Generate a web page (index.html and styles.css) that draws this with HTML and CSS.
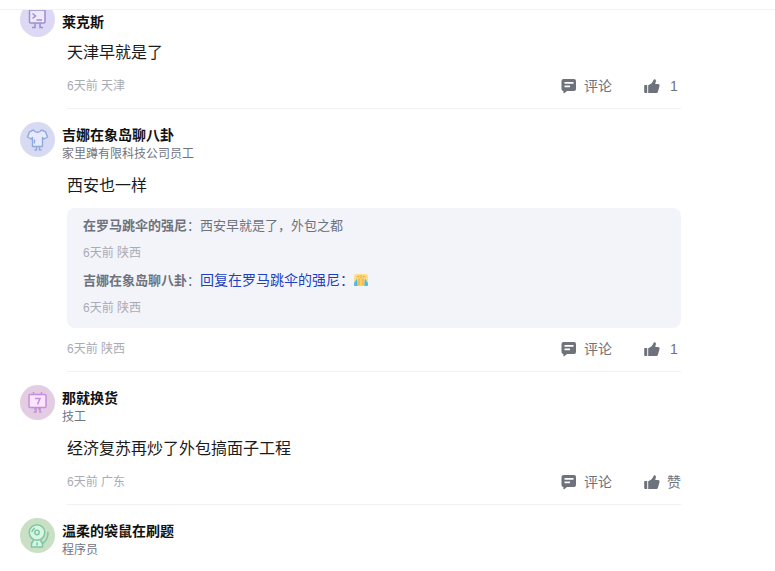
FILE: index.html
```html
<!DOCTYPE html>
<html lang="zh-CN">
  <head>
    <meta charset="UTF-8" />
    <meta name="viewport" content="width=device-width, initial-scale=1.0" />
    <title>评论</title>
    <link rel="stylesheet" href="styles.css">
  </head>
  <body>
    <svg class="sprite" aria-hidden="true">
      <symbol id="icon-comment" viewBox="0 0 16 16">
        <path fill="currentColor" fill-rule="evenodd" d="M2.500 1h10.500a2 2 0 0 1 2 2v8a2 2 0 0 1-2 2H6L3.300 15.200c-.4.300-.9.100-.9-.400V13A2 2 0 0 1 .5 11V3a2 2 0 0 1 2-2zM3.500 4v1.700h9V4zM3.500 7.500v1.700h5.500V7.500z" />
      </symbol>
      <symbol id="icon-like" viewBox="0 0 16 16">
        <path fill="currentColor" d="M.8 7h2.400v8H1.200A1 1 0 0 1 .2 14V7.600a.6.600 0 0 1 .6-.6zM4.200 7.200c2.800-1 4.500-2.700 5.200-4.900.3-.9.800-1.100 1.300-1 1 .2 1.400 1.100 1.200 2L11.200 6H14c1.100 0 1.800.9 1.500 1.900l-1.500 5.600c-.3 1-1 1.500-1.900 1.500H4.200z" />
      </symbol>
    </svg>
    <header class="topbar"></header>
    <main class="viewport">
      <section class="comments">
        <article class="comment">
          <div class="user user-plain">
            <svg class="avatar" viewBox="0 0 35 35">
              <circle cx="17.500" cy="17.500" r="17.500" fill="#ddd8f3" />
              <g fill="none" stroke="#9d90d0" stroke-width="1.500">
                <rect x="9.500" y="8" width="15.500" height="13" rx="1" fill="#eee9fd" />
                <path d="M12.500 11.500l3 2.500-3 2.500M16.500 18h5.500M15 21v4.500h-3M20 21v4.500h3" />
              </g>
            </svg>
            <div class="user-info">
              <h2 class="name">莱克斯</h2>
            </div>
          </div>
          <div class="body">
            <p class="content">天津早就是了</p>
            <div class="footer">
              <span class="meta">6天前 天津</span>
              <button class="action"><svg class="icon"><use href="#icon-comment" /></svg><span>评论</span></button>
              <button class="action"><svg class="icon"><use href="#icon-like" /></svg><span class="count">1</span></button>
            </div>
          </div>
        </article>

        <article class="comment">
          <div class="user">
            <svg class="avatar" viewBox="0 0 35 35">
              <circle cx="17.500" cy="17.500" r="17.500" fill="#d7daf2" />
              <g fill="none" stroke="#8eabdb" stroke-width="1.400" stroke-linejoin="round">
                <path fill="#e9e9fd" d="M13.500 8l-4 1.800-2 5.200 3.500 2 1.500-1.500v9h10v-9l1.500 1.500 3.500-2-2-5.200L21.500 8c-1.500 3-6.500 3-8 0z" />
                <path d="M14.500 17.500v4M16.500 24.500v3.500H14.500M19.500 24.500v3.500h2" />
              </g>
            </svg>
            <div class="user-info">
              <h2 class="name">吉娜在象岛聊八卦</h2>
              <p class="job">家里蹲有限科技公司员工</p>
            </div>
          </div>
          <div class="body">
            <p class="content">西安也一样</p>
            <div class="replies">
              <div class="reply">
                <p class="reply-text"><b>在罗马跳伞的强尼</b>：西安早就是了，外包之都</p>
                <p class="meta">6天前 陕西</p>
              </div>
              <div class="reply">
                <p class="reply-text">
                  <b>吉娜在象岛聊八卦</b>：<a class="reply-to" href="#">回复在罗马跳伞的强尼：</a><svg class="emoji" viewBox="0 0 14 14">
                    <rect y="1" width="14" height="12" rx="2" fill="#fbe08c" />
                    <path fill="#48bdf0" d="M3 5.500L0 10v2.500c1 .8 2.500.5 4 .5zM11 5.500l3 4.500v2.500c-1 .8-2.500.5-4 .5z" />
                    <path fill="#ffd15c" d="M4.500 4h5l1 9h-7z" />
                    <path fill="none" stroke="#f0a34c" d="M2.500 4l3-1M11.500 4l-3-1M5 5.500v6.500M9 5.500v6.500M7 2v3" />
                  </svg>
                </p>
                <p class="meta">6天前 陕西</p>
              </div>
            </div>
            <div class="footer">
              <span class="meta">6天前 陕西</span>
              <button class="action"><svg class="icon"><use href="#icon-comment" /></svg><span>评论</span></button>
              <button class="action"><svg class="icon"><use href="#icon-like" /></svg><span class="count">1</span></button>
            </div>
          </div>
        </article>

        <article class="comment">
          <div class="user">
            <svg class="avatar" viewBox="0 0 35 35">
              <circle cx="17.500" cy="17.500" r="17.500" fill="#e2cde3" />
              <g fill="none" stroke="#c58ede" stroke-width="1.500">
                <rect x="9" y="9.500" width="17" height="13" rx="1" fill="#fae5fd" />
                <path d="M13.500 7v3M21.500 7v3M15 13.500h5l-2.500 6M16 22.500v1.500h-2M20 22.500v1.500h-2M16 24v3h-2.500M20 24v3h1.500" />
              </g>
            </svg>
            <div class="user-info">
              <h2 class="name">那就换货</h2>
              <p class="job">技工</p>
            </div>
          </div>
          <div class="body">
            <p class="content">经济复苏再炒了外包搞面子工程</p>
            <div class="footer">
              <span class="meta">6天前 广东</span>
              <button class="action"><svg class="icon"><use href="#icon-comment" /></svg><span>评论</span></button>
              <button class="action"><svg class="icon"><use href="#icon-like" /></svg><span class="count">赞</span></button>
            </div>
          </div>
        </article>

        <article class="comment">
          <div class="user">
            <svg class="avatar" viewBox="0 0 35 35">
              <circle cx="17.500" cy="17.500" r="17.500" fill="#c9e0c5" />
              <g fill="none" stroke="#7fc5a8" stroke-width="1.500" stroke-linecap="round">
                <path fill="#d8f6df" d="M13.500 21l-1 3.500h-1V29h11v-4.500h-1l-1-3.500z" />
                <circle cx="17" cy="14.500" r="7.800" fill="#d8f6df" />
                <circle cx="17" cy="14.500" r="2.200" />
                <path d="M12 13.500c.4-1.500 1.200-2.500 2.500-3.200M17 25v2M28 14.500c0 5-1.500 8.500-5.500 11" />
              </g>
            </svg>
            <div class="user-info">
              <h2 class="name">温柔的袋鼠在刷题</h2>
              <p class="job">程序员</p>
            </div>
          </div>
        </article>
      </section>
    </main>
  </body>
</html>
```

FILE: styles.css
```css
* {
  box-sizing: border-box;
}
body {
  margin: 0;
  height: 100vh;
  display: flex;
  flex-direction: column;
  overflow: hidden;
  background-color: #fff;
  font-family: "Liberation Sans", "Noto Sans CJK SC", sans-serif;
}
h2,
p {
  margin: 0;
}
.sprite {
  display: none;
}
.topbar {
  flex: none;
  height: 10px;
  border-bottom: 1px solid #f1f1f3;
}
.viewport {
  flex: 1;
  overflow: hidden;
}
/* list is scrolled a little under the top bar */
.comments {
  max-width: 681px;
  margin-top: -21px;
  padding-left: 20px;
}
.comment {
  padding-top: 13px;
}
.user {
  display: flex;
  gap: 7px;
}
.avatar {
  flex: none;
  width: 35px;
  height: 35px;
}
.user-info {
  padding: 3px 0 11px;
}
.user-plain .user-info {
  padding: 10px 0 9px;
}
.name {
  font-size: 14px;
  line-height: 20px;
  font-weight: bold;
  color: #111;
}
.job {
  font-size: 12px;
  line-height: 18px;
  color: #71757f;
}
.body {
  margin-left: 47px;
  border-bottom: 1px solid #f1f1f3;
}
.content {
  font-size: 16px;
  line-height: 24px;
  color: #1b1b1d;
}
.footer {
  display: flex;
  align-items: center;
  gap: 32px;
  padding: 11px 0 12px;
}
.meta {
  flex: 1;
  font-size: 12px;
  line-height: 20px;
  color: #a9abb5;
}
.action {
  display: flex;
  align-items: center;
  gap: 7px;
  padding: 0;
  border: none;
  background: none;
  font-family: inherit;
  font-size: 14px;
  line-height: 20px;
  color: #6e727c;
  cursor: pointer;
}
.icon {
  width: 16px;
  height: 16px;
}
.count {
  width: 14px;
  text-align: center;
}
.replies {
  margin-top: 10px;
  padding: 8px 16px 10px;
  border-radius: 8px;
  background-color: #f3f4fa;
}
.reply + .reply {
  margin-top: 7px;
}
.reply-text {
  margin-bottom: 7px;
  font-size: 13px;
  line-height: 20px;
  color: #6e727c;
}
.reply-to {
  font-size: 14px;
  color: #1d3fc0;
  text-decoration: none;
}
.emoji {
  width: 14px;
  height: 14px;
  vertical-align: -2px;
}
```
